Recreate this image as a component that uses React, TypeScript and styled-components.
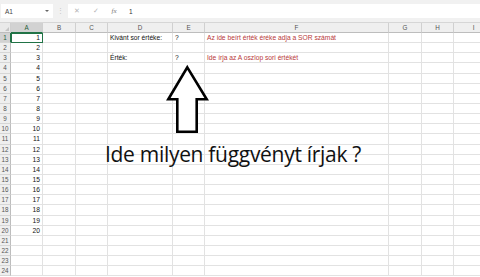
import React from "react";
import styled, { createGlobalStyle } from "styled-components";

const Global = createGlobalStyle`
  html, body { margin: 0; padding: 0; background: #ffffff; overflow: hidden; }
  body { font-family: "Liberation Sans", Arial, sans-serif; }
`;

const ROW_H = 10.15;
const COLS = [
  { key: "A", w: 32 },
  { key: "B", w: 33 },
  { key: "C", w: 32 },
  { key: "D", w: 65 },
  { key: "E", w: 32 },
  { key: "F", w: 184 },
  { key: "G", w: 33 },
  { key: "H", w: 32 },
  { key: "I", w: 40 },
];
const GRID_COLS = `11px ${COLS.map((c) => c.w + "px").join(" ")}`;

const Page = styled.div`
  position: relative;
  width: 480px;
  height: 277px;
  overflow: hidden;
  background: #fff;
`;

const FormulaBar = styled.div`
  height: 23px;
  background: #f1f1f1;
  display: flex;
  align-items: center;
  padding: 0 0 0 1px;
  box-sizing: border-box;
  border-bottom: 1px solid #d6d6d6;
`;

const NameBox = styled.div`
  width: 52px;
  height: 14px;
  background: #fff;
  display: flex;
  align-items: center;
  justify-content: space-between;
  box-sizing: border-box;
  padding: 0 4px 0 4px;
  font-size: 6.5px;
  color: #444;
`;

const Caret = styled.span`
  width: 0;
  height: 0;
  border-left: 2px solid transparent;
  border-right: 2px solid transparent;
  border-top: 2px solid #666;
`;

const Dots = styled.div`
  width: 15px;
  display: flex;
  justify-content: center;
  color: #c4c4c4;
  font-size: 7px;
`;

const FormulaArea = styled.div`
  flex: 1;
  height: 14px;
  background: #fff;
  display: flex;
  align-items: center;
  font-size: 6.5px;
  color: #333;
`;

const FxButton = styled.span<{ $w: number }>`
  width: ${(p) => p.$w}px;
  display: flex;
  justify-content: center;
  align-items: center;
  color: #b5b5b5;
  font-size: 7px;
`;

const FxText = styled.span`
  font-family: "Liberation Serif", serif;
  font-style: italic;
  color: #777;
  font-size: 7px;
`;

const FormulaValue = styled.span`
  padding-left: 7px;
  color: #333;
`;

const Sheet = styled.div`
  display: grid;
  grid-template-columns: ${GRID_COLS};
  grid-auto-rows: ${ROW_H}px;
  grid-template-rows: 10px;
`;

const Corner = styled.div`
  background: #e9e9e9;
  border-right: 1px solid #cfcfcf;
  border-bottom: 1px solid #bdbdbd;
  box-sizing: border-box;
  position: relative;
  &::after {
    content: "";
    position: absolute;
    right: 1px;
    bottom: 1px;
    border-left: 4px solid transparent;
    border-bottom: 4px solid #c4c4c4;
  }
`;

const ColHead = styled.div<{ $sel?: boolean }>`
  background: ${(p) => (p.$sel ? "#d2d2d2" : "#efefef")};
  border-right: 1px solid #d0d0d0;
  border-bottom: ${(p) => (p.$sel ? "1.5px solid #217346" : "1px solid #bdbdbd")};
  box-sizing: border-box;
  display: flex;
  align-items: center;
  justify-content: center;
  font-size: 6.3px;
  color: ${(p) => (p.$sel ? "#1f5f3a" : "#555")};
`;

const RowHead = styled.div<{ $sel?: boolean }>`
  background: ${(p) => (p.$sel ? "#d2d2d2" : "#efefef")};
  border-right: ${(p) => (p.$sel ? "1.5px solid #217346" : "1px solid #bdbdbd")};
  border-bottom: 1px solid #d6d6d6;
  box-sizing: border-box;
  display: flex;
  align-items: center;
  justify-content: center;
  font-size: 6.3px;
  color: ${(p) => (p.$sel ? "#1f5f3a" : "#555")};
`;

const Cell = styled.div<{ $align?: "left" | "right"; $red?: boolean; $sel?: boolean }>`
  position: relative;
  border-right: 1px solid #e2e2e2;
  border-bottom: 1px solid #e2e2e2;
  box-sizing: border-box;
  font-size: 6.7px;
  line-height: ${ROW_H - 1}px;
  white-space: nowrap;
  overflow: visible;
  padding: 0 2px;
  text-align: ${(p) => p.$align ?? "left"};
  color: ${(p) => (p.$red ? "#b8393a" : "#111")};
  z-index: ${(p) => (p.$sel ? 2 : 1)};
  ${(p) => (p.$sel ? "outline: 1.5px solid #217346; outline-offset: -1px;" : "")}
`;

const Arrow = styled.svg`
  position: absolute;
  left: 164px;
  top: 64px;
  z-index: 5;
`;

const Callout = styled.div`
  position: absolute;
  left: 105px;
  top: 140px;
  z-index: 5;
  font-family: "Open Sans", sans-serif;
  font-size: 21px;
  letter-spacing: -0.3px;
  color: #111;
  white-space: nowrap;
`;

const cellContent: Record<string, { text: string; red?: boolean }> = {
  "D1": { text: "Kivánt sor értéke:" },
  "E1": { text: "?" },
  "F1": { text: "Az ide beírt érték éréke adja a SOR számát", red: true },
  "D3": { text: "Érték:" },
  "E3": { text: "?" },
  "F3": { text: "Ide írja az A oszlop sori értékét", red: true },
};

export default function App() {
  const rows = Array.from({ length: 24 }, (_, i) => i + 1);
  return (
    <Page>
      <Global />
      <FormulaBar>
        <NameBox>
          <span>A1</span>
          <Caret />
        </NameBox>
        <Dots>⋮</Dots>
        <FormulaArea>
          <FxButton $w={18}>✕</FxButton>
          <FxButton $w={20}>✓</FxButton>
          <FxButton $w={16}>
            <FxText>fx</FxText>
          </FxButton>
          <FormulaValue>1</FormulaValue>
        </FormulaArea>
      </FormulaBar>
      <Sheet>
        <Corner />
        {COLS.map((c) => (
          <ColHead key={c.key} $sel={c.key === "A"}>
            {c.key}
          </ColHead>
        ))}
        {rows.map((r) => (
          <React.Fragment key={r}>
            <RowHead $sel={r === 1}>{r}</RowHead>
            {COLS.map((c) => {
              const id = c.key + r;
              if (c.key === "A") {
                return (
                  <Cell key={id} $align="right" $sel={r === 1}>
                    {r <= 20 ? r : ""}
                  </Cell>
                );
              }
              const content = cellContent[id];
              return (
                <Cell key={id} $red={content?.red}>
                  {content?.text ?? ""}
                </Cell>
              );
            })}
          </React.Fragment>
        ))}
      </Sheet>
      <Arrow width="46" height="72" viewBox="164 64 46 72">
        <polygon
          points="187.3,67.3 206.7,99.3 196.7,99.3 196.7,131.7 177.3,131.7 177.3,99.3 168.3,99.3"
          fill="#fff"
          stroke="#000"
          strokeWidth="2.6"
          strokeLinejoin="miter"
        />
      </Arrow>
      <Callout>Ide milyen függvényt írjak ?</Callout>
    </Page>
  );
}
